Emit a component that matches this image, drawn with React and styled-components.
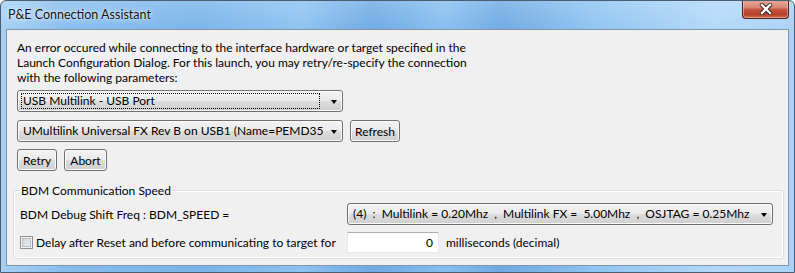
import styled, { createGlobalStyle } from "styled-components";

const FONT = `"Lato", "Liberation Sans", sans-serif`;

const GlobalStyle = createGlobalStyle`
  html, body {
    margin: 0;
    padding: 0;
    background: #ffffff;
  }
  * {
    box-sizing: border-box;
  }
`;

const Window = styled.div`
  width: 795px;
  height: 273px;
  display: flex;
  flex-direction: column;
  border: 1px solid #4b5d70;
  border-radius: 6px 6px 0 0;
  background:
    linear-gradient(180deg, rgba(255, 255, 255, 0.18) 0%, rgba(255, 255, 255, 0) 12%),
    linear-gradient(
      90deg,
      #a7d0f4 0%,
      #86bdee 8%,
      #79b4ea 25%,
      #8cc2f1 38%,
      #6ea9e3 47%,
      #86bff0 56%,
      #6fa9e2 63%,
      #8ec4f2 75%,
      #b2d8f8 90%,
      #a9d2f6 100%
    );
  font-family: ${FONT};
  font-size: 12px;
  color: #000;
  overflow: hidden;
`;

const TitleBar = styled.div`
  height: 28px;
  display: flex;
  align-items: flex-start;
  justify-content: space-between;
  padding: 0 5px 0 7px;
  flex-shrink: 0;
`;

const Title = styled.span`
  margin-top: 6px;
  font-size: 12.5px;
  line-height: 15px;
  color: #111;
  text-shadow: 0 0 6px rgba(255, 255, 255, 0.9), 0 0 2px rgba(255, 255, 255, 0.8);
`;

const CloseButton = styled.div`
  width: 47px;
  height: 19px;
  margin-top: -1px;
  display: flex;
  align-items: center;
  justify-content: center;
  border: 1px solid #4a2121;
  border-top: none;
  border-radius: 0 0 4px 4px;
  background: linear-gradient(180deg, #e7a997 0%, #d98a77 40%, #c4513b 55%, #b8412c 80%, #cf6a4a 100%);
  box-shadow: inset 0 0 0 1px rgba(255, 220, 210, 0.45);
`;

const Client = styled.div`
  flex: 1;
  margin: 0 5px 6px 5px;
  border: 1px solid #8595a8;
  background: #f0f0f0;
  padding: 10px 4px 0 6px;
  display: flex;
  flex-direction: column;
`;

const Section = styled.div`
  padding: 0 4px;
  display: flex;
  flex-direction: column;
`;

const Message = styled.p`
  margin: 0;
  line-height: 15px;
`;

const Line = styled.span`
  display: block;
  white-space: nowrap;
`;

const Row = styled.div`
  display: flex;
  align-items: center;
  gap: ${(p) => p.$gap || 7}px;
  margin-top: ${(p) => p.$top || 0}px;
`;

const Combo = styled.div`
  width: ${(p) => p.$width}px;
  height: 22px;
  display: flex;
  align-items: center;
  padding: 0 4px 0 3px;
  border: 1px solid #707070;
  border-radius: 3px;
  background: linear-gradient(180deg, #f2f2f2 0%, #ebebeb 49%, #dddddd 50%, #cfcfcf 100%);
  box-shadow: inset 0 0 0 1px #fbfbfb;
`;

const ComboText = styled.span`
  flex: 1;
  min-width: 0;
  overflow: hidden;
  white-space: pre;
  line-height: 14px;
  padding: 0 1px;
  margin-right: ${(p) => (p.$focused ? 6 : 2)}px;
  border: 1px ${(p) => (p.$focused ? "dotted #000" : "solid transparent")};
`;

const Arrow = styled.span`
  width: 0;
  height: 0;
  border-left: 3.5px solid transparent;
  border-right: 3.5px solid transparent;
  border-top: 4px solid #000;
  margin: 1px 1px 0 5px;
  flex-shrink: 0;
`;

const Button = styled.div`
  height: 22px;
  display: flex;
  align-items: center;
  padding: 0 ${(p) => p.$pad || 5}px;
  border: 1px solid #707070;
  border-radius: 3px;
  background: linear-gradient(180deg, #f2f2f2 0%, #ebebeb 49%, #dddddd 50%, #cfcfcf 100%);
  box-shadow: inset 0 0 0 1px #fbfbfb;
`;

const Group = styled.fieldset`
  margin: 12px 0 0 0;
  padding: 5px 8px 5px 6px;
  border: 1px solid #d5dfe5;
  border-radius: 3px;
  box-shadow: inset 0 0 0 1px #ffffff;
`;

const Legend = styled.legend`
  padding: 0 1px;
  line-height: 15px;
`;

const FieldGrid = styled.div`
  display: grid;
  grid-template-columns: 327px 1fr;
  row-gap: 7px;
  align-items: center;
`;

const CheckLabel = styled.div`
  display: flex;
  align-items: center;
  gap: 3px;
`;

const CheckBox = styled.span`
  width: 13px;
  height: 13px;
  border: 1px solid #8e8f8f;
  box-shadow: inset 0 0 0 1px #f4f4f4, inset 0 0 0 2px #b9bdc3;
  background-image: linear-gradient(135deg, #cbcfd5 0%, #f4f4f4 100%);
`;

const NumberBox = styled.div`
  width: 92px;
  height: 21px;
  display: flex;
  align-items: center;
  justify-content: flex-end;
  padding-right: 5px;
  background: #fff;
  border: 1px solid #e3e9ef;
  border-top-color: #abadb3;
`;

function CloseGlyph() {
  return (
    <svg width="14" height="12" viewBox="0 0 14 12">
      <path
        d="M3 2 L11 10 M11 2 L3 10"
        stroke="#3a1a14"
        strokeWidth="4.4"
        strokeLinecap="round"
        fill="none"
      />
      <path
        d="M3 2 L11 10 M11 2 L3 10"
        stroke="#ffffff"
        strokeWidth="2.4"
        strokeLinecap="square"
        fill="none"
      />
    </svg>
  );
}

export default function App() {
  return (
    <>
      <GlobalStyle />
      <Window>
        <TitleBar>
          <Title>P&amp;E Connection Assistant</Title>
          <CloseButton>
            <CloseGlyph />
          </CloseButton>
        </TitleBar>
        <Client>
          <Section>
            <Message>
              <Line>
                An error occured while connecting to the interface hardware or target specified in the
              </Line>
              <Line>
                Launch Configuration Dialog. For this launch, you may retry/re-specify the connection
              </Line>
              <Line>with the following parameters:</Line>
            </Message>
            <Row $top={5}>
              <Combo $width={326}>
                <ComboText $focused>USB Multilink - USB Port</ComboText>
                <Arrow />
              </Combo>
            </Row>
            <Row $top={8}>
              <Combo $width={326}>
                <ComboText>UMultilink Universal FX Rev B on USB1 (Name=PEMD357A)</ComboText>
                <Arrow />
              </Combo>
              <Button $pad={4}>Refresh</Button>
            </Row>
            <Row $top={7} $gap={7}>
              <Button>Retry</Button>
              <Button>Abort</Button>
            </Row>
          </Section>
          <Group>
            <Legend>BDM Communication Speed</Legend>
            <FieldGrid>
              <span>BDM Debug Shift Freq : BDM_SPEED =</span>
              <Combo $width={426}>
                <ComboText>
                  {"(4)  :  Multilink = 0.20Mhz  ,  Multilink FX =  5.00Mhz  ,  OSJTAG = 0.25Mhz"}
                </ComboText>
                <Arrow />
              </Combo>
              <CheckLabel>
                <CheckBox />
                <span>Delay after Reset and before communicating to target for</span>
              </CheckLabel>
              <Row $gap={7}>
                <NumberBox>0</NumberBox>
                <span>milliseconds (decimal)</span>
              </Row>
            </FieldGrid>
          </Group>
        </Client>
      </Window>
    </>
  );
}
